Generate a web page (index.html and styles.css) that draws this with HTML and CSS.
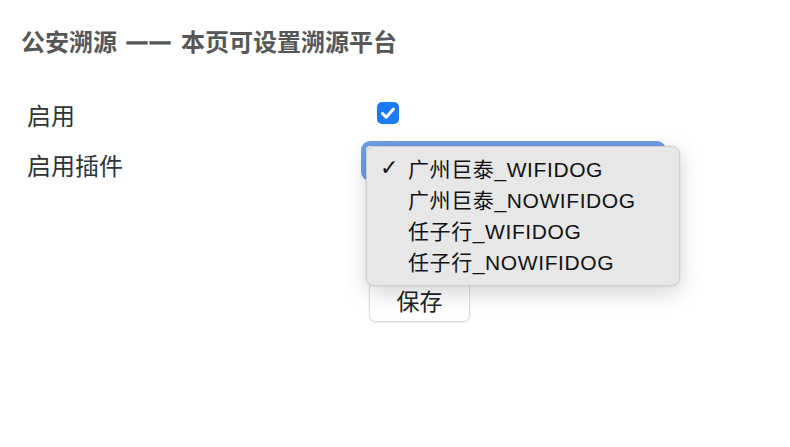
FILE: index.html
```html
<!DOCTYPE html>
<html lang="zh-CN">
<head>
<meta charset="utf-8">
<title>公安溯源</title>
<link rel="stylesheet" href="styles.css">
</head>
<body>
<div class="page">
  <h1 class="title">公安溯源<span class="dash">——</span>本页可设置溯源平台</h1>
  <div class="form">
    <div class="label">启用</div>
    <div class="control">
      <span class="checkbox">
        <svg viewBox="0 0 22 22" width="22" height="22"><path d="M5.5 11.5 L9.2 15.2 L16.5 7" fill="none" stroke="#fff" stroke-width="3" stroke-linecap="round" stroke-linejoin="round"/></svg>
      </span>
    </div>
    <div class="label">启用插件</div>
    <div class="control">
      <div class="select-wrap">
        <div class="select"></div>
        <ul class="menu">
          <li class="item"><span class="check">✓</span>广州巨泰_WIFIDOG</li>
          <li class="item"><span class="check"></span>广州巨泰_NOWIFIDOG</li>
          <li class="item"><span class="check"></span>任子行_WIFIDOG</li>
          <li class="item"><span class="check"></span>任子行_NOWIFIDOG</li>
        </ul>
      </div>
    </div>
    <div class="label"></div>
    <div class="control control-top">
      <button class="save">保存</button>
    </div>
  </div>
</div>
</body>
</html>
```

FILE: styles.css
```css
html, body {
  margin: 0;
  padding: 0;
  background: #fff;
}
body {
  font-family: "Noto Sans CJK SC", "Liberation Sans", sans-serif;
  color: #333;
}
.page {
  padding: 24px 0 0 21px;
  min-height: 447px;
  box-sizing: border-box;
}
.title {
  margin: 0;
  font-size: 24px;
  line-height: 34px;
  font-weight: bold;
  color: #575757;
}
.dash {
  display: inline-block;
  font-family: "Liberation Sans", sans-serif;
  font-weight: bold;
  font-size: 20px;
  letter-spacing: 3px;
  padding: 0 8px 0 10px;
  vertical-align: top;
  color: #575757;
  -webkit-text-stroke: 1.2px #575757;
}
.form {
  display: grid;
  grid-template-columns: 340px 320px;
  grid-template-rows: 50px 50px auto;
  margin-top: 32px;
  margin-left: 6px;
}
.label {
  font-size: 24px;
  line-height: 50px;
  color: #333;
}
.control {
  display: flex;
  align-items: center;
}
.control-top {
  align-items: flex-start;
}
.checkbox {
  display: inline-flex;
  width: 22px;
  height: 22px;
  border-radius: 5px;
  background: #1a7bf2;
  margin-left: 10px;
  margin-top: -4px;
}
.select-wrap {
  position: relative;
  width: 305px;
  height: 40px;
  margin-left: -6px;
  margin-top: -8px;
}
.select {
  width: 100%;
  height: 100%;
  box-sizing: border-box;
  border: 5px solid #6e9fe4;
  border-radius: 9px;
  background: #f4f4f4;
}
.menu {
  position: absolute;
  left: 5px;
  top: 5px;
  width: 314px;
  box-sizing: border-box;
  margin: 0;
  padding: 5px 0 9px 0;
  list-style: none;
  background: #e7e7e8;
  border: 1px solid #cfcfcf;
  border-radius: 8px;
  box-shadow: 0 6px 22px rgba(0,0,0,0.18), 0 0 2px rgba(0,0,0,0.12);
  z-index: 2;
}
.item {
  display: flex;
  align-items: center;
  height: 31px;
  font-family: "Liberation Sans", "Noto Sans CJK SC", sans-serif;
  font-size: 21px;
  letter-spacing: 0.6px;
  color: #111;
  white-space: nowrap;
}
.check {
  display: inline-block;
  width: 28px;
  margin-left: 13px;
  font-family: "DejaVu Sans", sans-serif;
  font-size: 22px;
  letter-spacing: 0;
}
.save {
  margin-left: 2px;
  margin-top: 91px;
  width: 101px;
  height: 41px;
  font-family: "Noto Sans CJK SC", sans-serif;
  font-size: 23px;
  color: #222;
  background: #fff;
  border: 1px solid #dcdcdc;
  border-radius: 7px;
  box-shadow: 0 1px 2px rgba(0,0,0,0.1);
  padding: 0 0 3px 0;
  line-height: 36px;
}
```
